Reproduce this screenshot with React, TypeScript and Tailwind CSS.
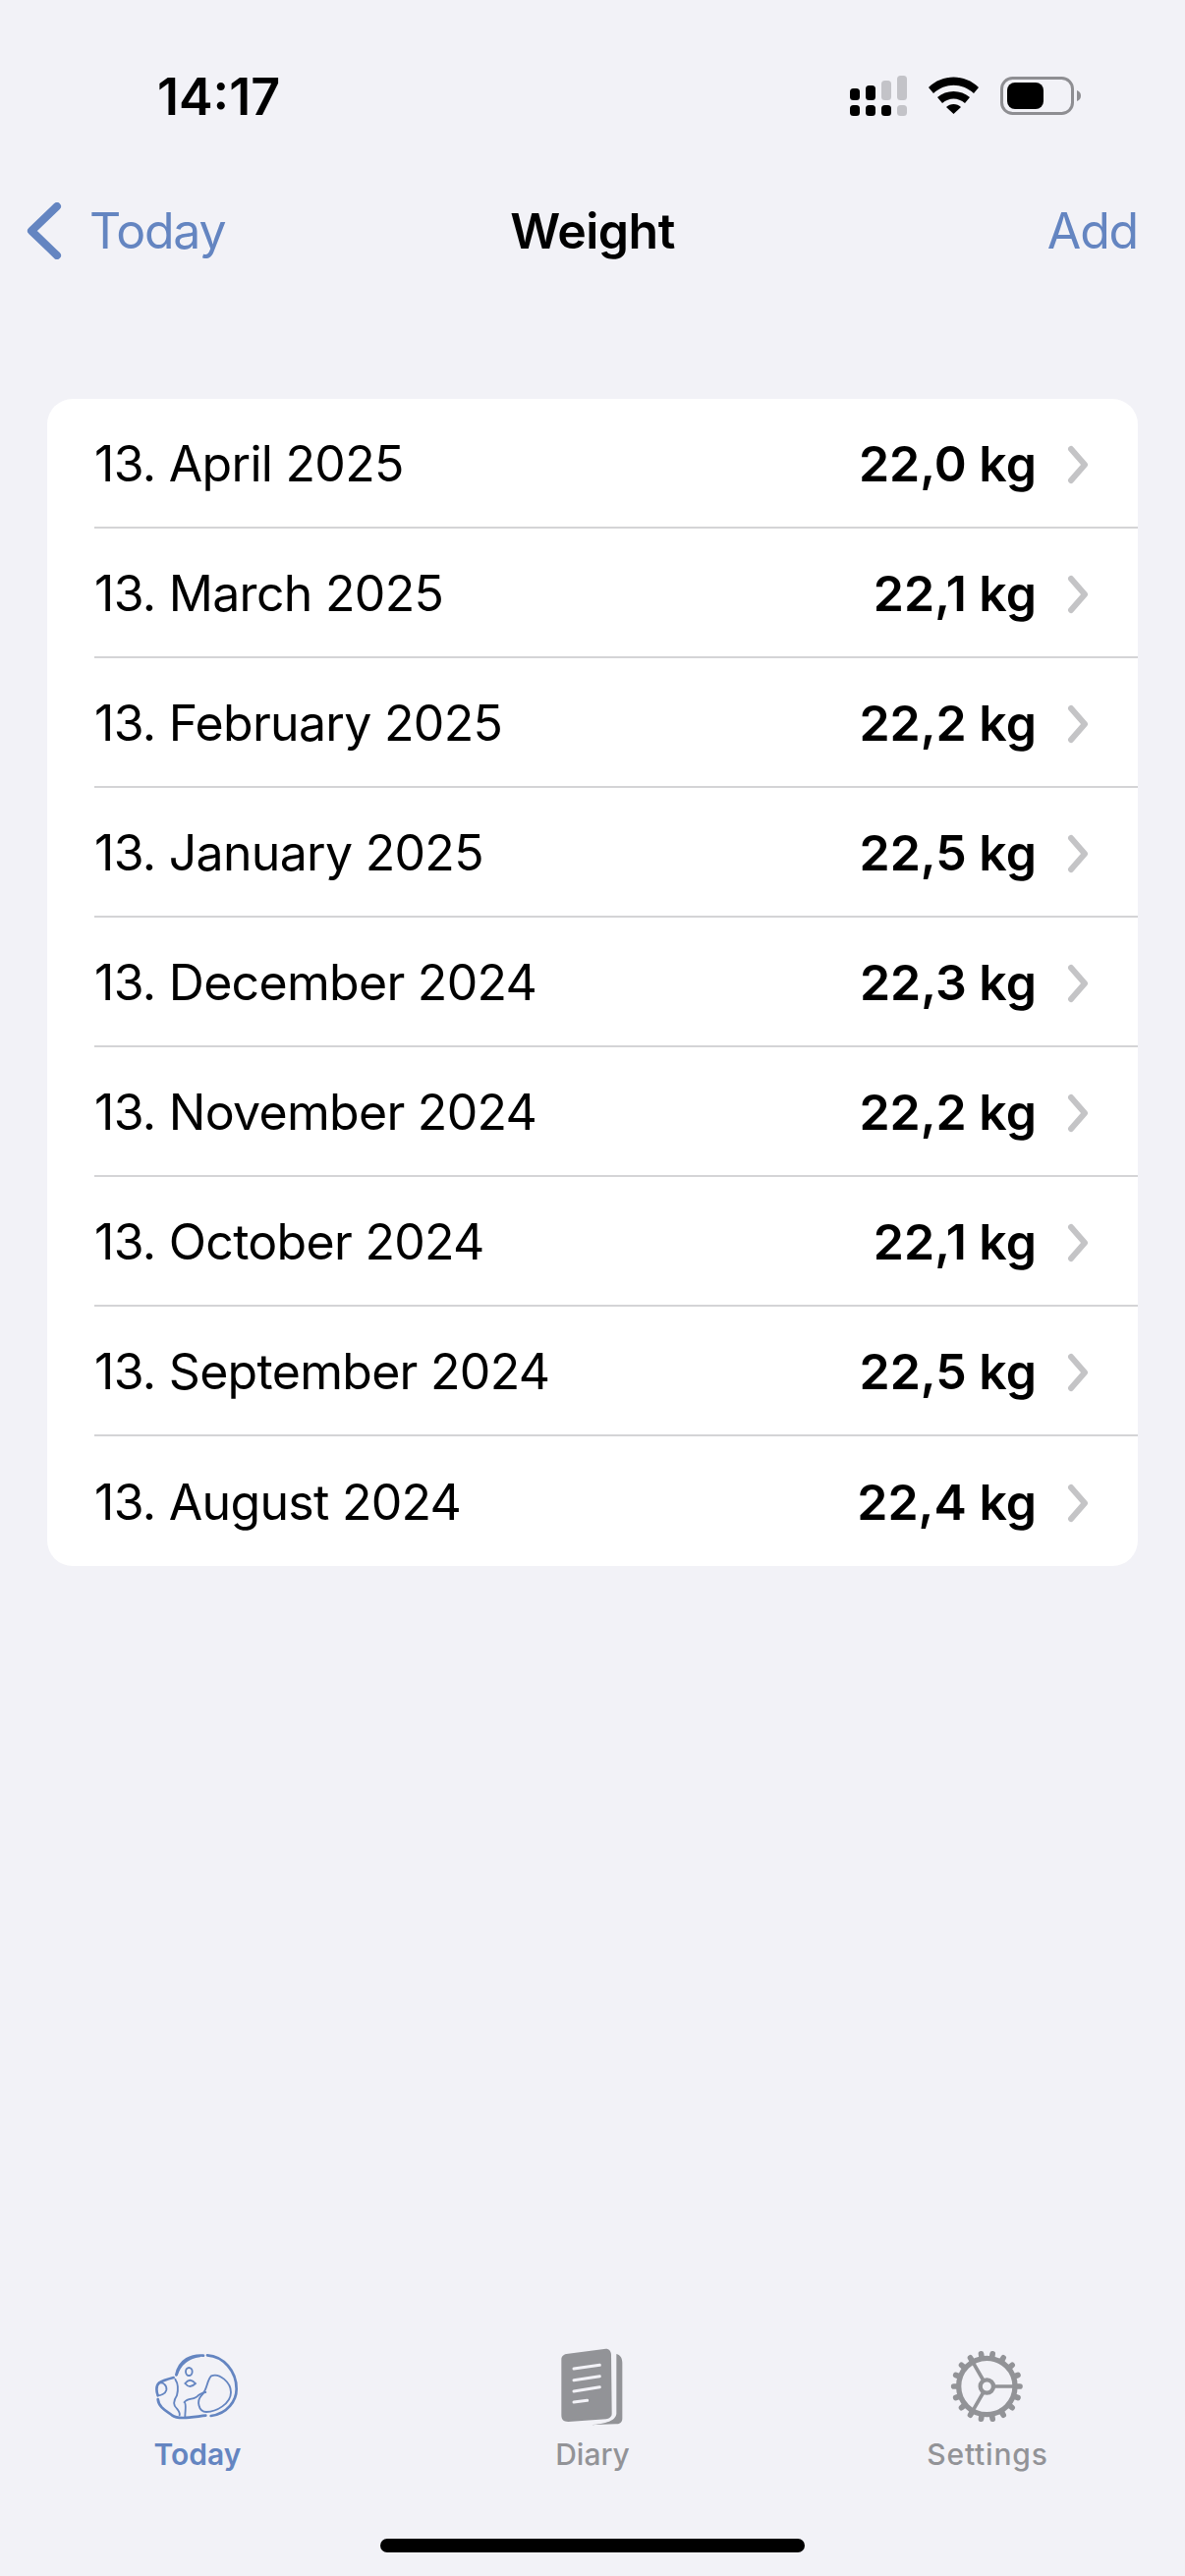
import React from 'react';

const rows = [
  { date: '13. April 2025', weight: '22,0 kg' },
  { date: '13. March 2025', weight: '22,1 kg' },
  { date: '13. February 2025', weight: '22,2 kg' },
  { date: '13. January 2025', weight: '22,5 kg' },
  { date: '13. December 2024', weight: '22,3 kg' },
  { date: '13. November 2024', weight: '22,2 kg' },
  { date: '13. October 2024', weight: '22,1 kg' },
  { date: '13. September 2024', weight: '22,5 kg' },
  { date: '13. August 2024', weight: '22,4 kg' },
];

const StatusIcons = () => (
  <svg width="244" height="44" viewBox="0 0 244 44" className="block">
    {/* signal */}
    <g fill="#000">
      <rect x="5" y="16" width="10" height="12" rx="3.5" />
      <rect x="21" y="13" width="10" height="15" rx="3.5" />
      <rect x="5" y="33" width="10" height="11" rx="3.5" />
      <rect x="21" y="33" width="10" height="11" rx="3.5" />
      <rect x="37" y="33" width="10" height="11" rx="3.5" />
    </g>
    <g fill="#c3c3c8">
      <rect x="37" y="8" width="10" height="20" rx="3.5" />
      <rect x="53" y="3" width="10" height="25" rx="3.5" />
      <rect x="53" y="33" width="10" height="11" rx="3.5" />
    </g>
    {/* wifi */}
    <g fill="#000">
      <path d="M85 15 C99 1 122 1 136 15 L131 21 C119 10 102 10 90 21 Z" />
      <path d="M94 25 C103 17 118 17 127 25 L122 31 C115 25 106 25 99 31 Z" />
      <path d="M103 35 C107 31 114 31 118 35 L110.5 42 Z" />
    </g>
    {/* battery */}
    <rect x="159.5" y="5.5" width="72" height="36" rx="11" fill="none" stroke="#8e8e92" strokeWidth="3" />
    <rect x="165" y="10" width="37" height="27" rx="8" fill="#000" />
    <path d="M236 18 C239 19 240 21 240 23.5 C240 26 239 28 236 29 Z" fill="#8e8e92" />
  </svg>
);

const TodayIcon = () => (
  <svg width="200" height="90" viewBox="-57 75 600 270" className="block" fill="none" stroke="#6485c1" strokeLinecap="round">
    <g strokeWidth="8">
      <path d="M273 112 C322 115 362 160 362 215 C362 250 335 290 284 297" />
      <path d="M261 113 C225 110 188 125 178 172" />
      <path d="M170 180 C150 185 135 190 125 197 C115 205 118 225 122 235" />
      <path d="M122 246 C125 275 155 285 165 295 C185 310 230 300 268 296" />
    </g>
    <g strokeWidth="5.5">
      <path d="M250 115 C215 120 190 140 180 172" />
      <path d="M125 197 C140 193 150 205 148 218 C145 230 130 235 122 235" />
      <path d="M175 185 C185 200 185 215 180 235 C170 250 168 265 180 275 C188 285 190 290 188 295" />
      <path d="M205 300 C205 280 210 260 203 255 C215 240 235 250 245 235 C255 228 260 225 268 225" />
      <path d="M285 175 C310 165 345 195 345 225 C345 260 300 285 270 285 C245 285 240 250 255 235 C275 215 270 190 285 175 Z" />
      <ellipse cx="217" cy="162" rx="10" ry="12" />
      <path d="M205 198 C215 185 225 185 237 198 C225 210 215 210 205 198 Z" />
    </g>
  </svg>
);

const DiaryIcon = () => (
  <svg width="200" height="90" viewBox="-51 75 600 270" className="block">
    <path d="M322 108 C335 112 340 122 340 135 L340 305 C340 318 330 322 320 322 L235 325 C280 322 320 315 322 290 Z" fill="#929397" />
    <path d="M175 107 L290 92 C300 92 306 100 306 110 L308 290 C308 300 300 305 290 307 L175 315 C160 315 154 308 154 295 L154 125 C154 115 160 108 175 107 Z" fill="#929397" />
    <g stroke="#f2f2f7" strokeWidth="9" strokeLinecap="round" fill="none">
      <path d="M192 153 L271 142" />
      <path d="M192 188 L271 176" />
      <path d="M192 222 L271 209" />
      <path d="M192 255 L233 250" />
    </g>
  </svg>
);

const GearIcon = () => {
  const teeth = Array.from({ length: 18 }, (_, i) => i * 20);
  const spokes = [0, 120, 240];
  return (
    <svg width="200" height="90" viewBox="-15 75 600 270" className="block" fill="none" stroke="#929397" strokeLinecap="round">
      <circle cx="283" cy="207" r="86" strokeWidth="16" />
      <circle cx="283" cy="207" r="20" strokeWidth="13" />
      {teeth.map((a) => (
        <line key={a} x1="373" y1="207" x2="384" y2="207" strokeWidth="17" transform={`rotate(${a} 283 207)`} />
      ))}
      {spokes.map((a) => (
        <line key={a} x1="303" y1="207" x2="365" y2="207" strokeWidth="11" transform={`rotate(${a} 283 207)`} />
      ))}
    </svg>
  );
};

const Chevron = () => (
  <svg width="24" height="40" viewBox="0 0 24 40" className="shrink-0">
    <path d="M5 4 L19 20 L5 36" fill="none" stroke="#c4c4c6" strokeWidth="6" strokeLinecap="round" strokeLinejoin="round" />
  </svg>
);

export default function App() {
  return (
    <div className="flex h-[2622px] w-[1206px] flex-col overflow-hidden bg-[#f2f2f7] font-['Inter',sans-serif] text-black">
      {/* Status bar */}
      <div className="flex h-[118px] items-end justify-between pl-[160px] pr-[102px]">
        <span className="text-[52px] leading-[38px] font-semibold">14:17</span>
        <StatusIcons />
      </div>

      {/* Nav bar */}
      <div className="relative mt-[82px] flex h-[70px] items-center justify-between pl-[27px] pr-[48px] text-[50px] tracking-[-1.2px] text-[#6485c1]">
        <div className="flex items-center gap-[28px]">
          <svg width="36" height="58" viewBox="0 0 36 58">
            <path d="M31 4 L5 29 L31 54" fill="none" stroke="#6485c1" strokeWidth="8" strokeLinecap="round" strokeLinejoin="round" />
          </svg>
          <span>Today</span>
        </div>
        <span className="absolute left-0 right-0 text-center font-semibold tracking-[-0.5px] text-black">Weight</span>
        <span>Add</span>
      </div>

      {/* List */}
      <div className="mx-[48px] mt-[136px] overflow-hidden rounded-[26px] bg-white">
        {rows.map((row, i) => (
          <div key={row.date} className="flex h-[132px] pl-[48px]">
            <div className={`flex flex-1 items-center pr-[49px] pt-[3px] ${i < rows.length - 1 ? 'border-b-2 border-[#d4d4d6]' : ''}`}>
              <span className="flex-1 text-[50px] tracking-[-0.7px]">{row.date}</span>
              <span className="mr-[30px] text-[50px] font-semibold">{row.weight}</span>
              <Chevron />
            </div>
          </div>
        ))}
      </div>

      {/* Tab bar */}
      <div className="mt-auto">
        <div className="grid grid-cols-3">
          <div className="flex flex-col items-center text-[#6485c1]">
            <TodayIcon />
            <span className="mt-[5px] text-[30px] leading-[36px] font-semibold">Today</span>
          </div>
          <div className="flex flex-col items-center text-[#929397]">
            <DiaryIcon />
            <span className="mt-[5px] text-[30px] leading-[36px] font-medium">Diary</span>
          </div>
          <div className="flex flex-col items-center text-[#929397]">
            <GearIcon />
            <span className="mt-[5px] text-[30px] leading-[36px] font-medium tracking-[0.8px]">Settings</span>
          </div>
        </div>
        <div className="mx-auto mb-[24px] mt-[68px] h-[14px] w-[432px] rounded-full bg-black" />
      </div>
    </div>
  );
}
